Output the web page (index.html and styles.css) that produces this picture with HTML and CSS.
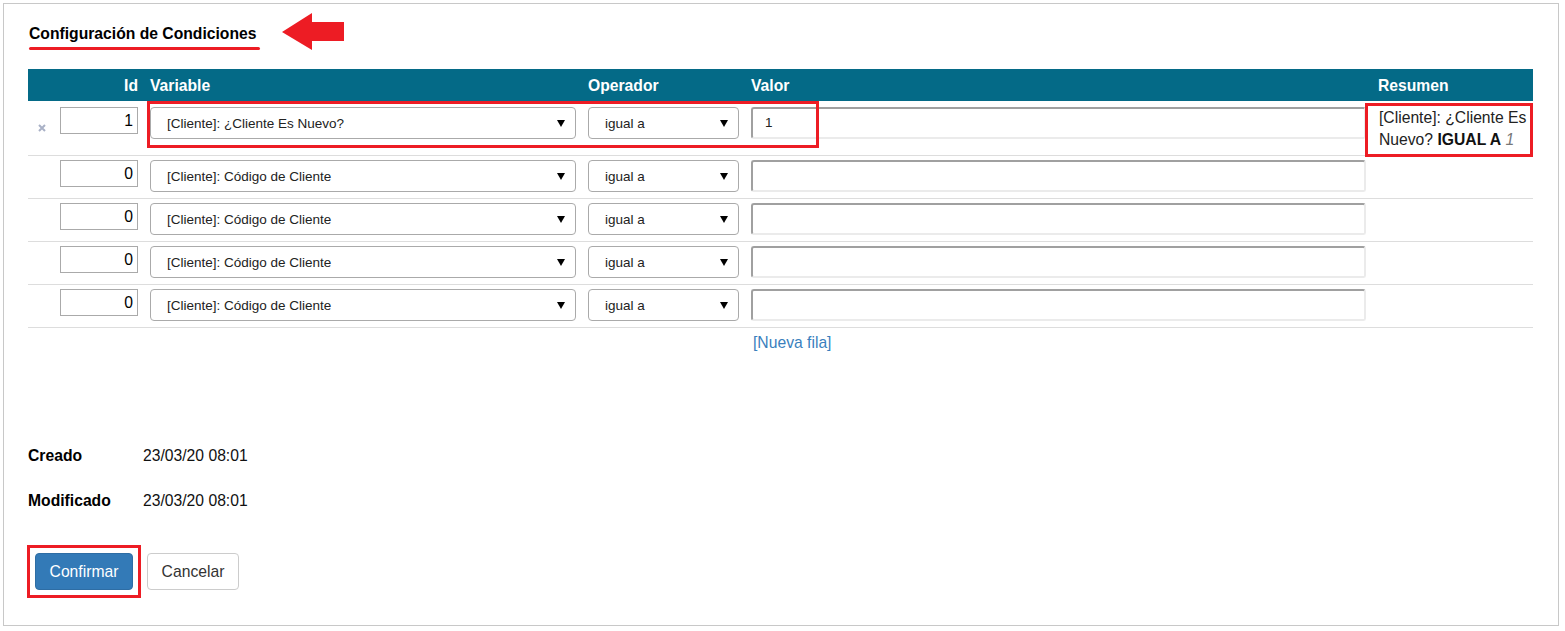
FILE: index.html
```html
<!DOCTYPE html>
<html lang="es">
<head>
    <meta charset="UTF-8">
    <meta name="viewport" content="width=device-width, initial-scale=1.0">
    <title>Configuración de Condiciones</title>
    <link rel="stylesheet" href="styles.css">
</head>
<body>
    <div class="panel">
        <!-- Title -->
        <div class="title-row">
            <h3 class="title">Configuración de Condiciones</h3>
            <svg class="arrow" width="62" height="37" viewBox="0 0 62 37">
                <polygon points="0,19 30,0 30,9 62,9 62,28 30,28 30,37" fill="#ed1c24"/>
            </svg>
        </div>

        <!-- Conditions grid -->
        <div class="grid">
            <div class="row head">
                <span></span>
                <span class="right">Id</span>
                <span>Variable</span>
                <span>Operador</span>
                <span>Valor</span>
                <span>Resumen</span>
            </div>

            <div class="row first">
                <span class="del">
                    <svg width="8" height="8" viewBox="0 0 8 8"><path d="M1 1L7 7M7 1L1 7" stroke="#a9b1c6" stroke-width="2"/></svg>
                </span>
                <div class="id-input">1</div>
                <div class="select"><span>[Cliente]: ¿Cliente Es Nuevo?</span><i class="caret"></i></div>
                <div class="select"><span>igual a</span><i class="caret"></i></div>
                <div class="value-input">1</div>
                <div class="summary">[Cliente]: ¿Cliente Es Nuevo? <b>IGUAL A</b> <em>1</em></div>
            </div>

            <div class="row">
                <span></span>
                <div class="id-input">0</div>
                <div class="select"><span>[Cliente]: Código de Cliente</span><i class="caret"></i></div>
                <div class="select"><span>igual a</span><i class="caret"></i></div>
                <div class="value-input"></div>
                <div class="summary"></div>
            </div>

            <div class="row">
                <span></span>
                <div class="id-input">0</div>
                <div class="select"><span>[Cliente]: Código de Cliente</span><i class="caret"></i></div>
                <div class="select"><span>igual a</span><i class="caret"></i></div>
                <div class="value-input"></div>
                <div class="summary"></div>
            </div>

            <div class="row">
                <span></span>
                <div class="id-input">0</div>
                <div class="select"><span>[Cliente]: Código de Cliente</span><i class="caret"></i></div>
                <div class="select"><span>igual a</span><i class="caret"></i></div>
                <div class="value-input"></div>
                <div class="summary"></div>
            </div>

            <div class="row">
                <span></span>
                <div class="id-input">0</div>
                <div class="select"><span>[Cliente]: Código de Cliente</span><i class="caret"></i></div>
                <div class="select"><span>igual a</span><i class="caret"></i></div>
                <div class="value-input"></div>
                <div class="summary"></div>
            </div>

            <div class="add-row"><a href="#">[Nueva fila]</a></div>

            <!-- highlight marks -->
            <span class="mark mark-cond"></span>
            <span class="mark mark-sum"></span>
        </div>

        <!-- Meta -->
        <div class="meta">
            <div class="meta-row"><span class="label">Creado</span><span>23/03/20 08:01</span></div>
            <div class="meta-row"><span class="label">Modificado</span><span>23/03/20 08:01</span></div>
        </div>

        <!-- Actions -->
        <div class="actions">
            <span class="btn-mark"><button class="btn btn-primary">Confirmar</button></span>
            <button class="btn btn-default">Cancelar</button>
        </div>
    </div>
</body>
</html>
```

FILE: styles.css
```css
body {
    font-family: "Liberation Sans", Arial, sans-serif;
    font-size: 15.7px;
    color: #333;
    margin: 0;
    background: #fff;
}

.panel {
    box-sizing: border-box;
    width: 1556px;
    height: 623px;
    margin: 3px 0 0 3px;
    padding: 21px 24px 0 24px;
    border: 1px solid #c8c8c8;
}

/* Title */
.title-row {
    display: flex;
    align-items: flex-start;
}

.title {
    margin: 0 0 0 1px;
    font-size: 15.7px;
    line-height: 18px;
    font-weight: bold;
    color: #000;
}

.title::after {
    content: "";
    display: block;
    width: calc(100% + 4px);
    height: 3px;
    margin-top: 4px;
    border-radius: 2px;
    background: #ed1c24;
}

.arrow {
    margin: -12px 0 0 26px;
}

/* Grid */
.grid {
    position: relative;
    margin-top: 19px;
    width: 1505px;
}

.row {
    display: grid;
    grid-template-columns: 20px 78px 426px 151px 615px 155px;
    column-gap: 12px;
    align-items: start;
    padding: 4px 0 6px;
    border-bottom: 1px solid #ddd;
}

.row.head {
    height: 32px;
    box-sizing: border-box;
    padding: 2px 0 0;
    align-items: center;
    border: none;
    background: #046a87;
    color: #fff;
    font-weight: bold;
}

.row.first {
    padding: 6px 0 6px;
}

.right { text-align: right; }

.del {
    padding: 17px 0 0 10px;
    line-height: 0;
}

.id-input {
    box-sizing: border-box;
    height: 27px;
    line-height: 25px;
    padding-right: 4px;
    text-align: right;
    border: 1px solid #aaa;
    color: #000;
}

.select {
    box-sizing: border-box;
    height: 32px;
    display: flex;
    align-items: center;
    justify-content: space-between;
    padding: 0 10px 0 16px;
    border: 1px solid #aaa;
    border-radius: 4px;
    font-size: 13.5px;
    color: #222;
}

.caret {
    width: 0;
    height: 0;
    border-left: 4.5px solid transparent;
    border-right: 4.5px solid transparent;
    border-top: 7px solid #000;
}

.value-input {
    box-sizing: border-box;
    height: 32px;
    line-height: 28px;
    padding-left: 12px;
    border-top: 2px solid #a0a0a0;
    border-left: 2px solid #a0a0a0;
    border-right: 2px solid #ebebeb;
    border-bottom: 2px solid #ebebeb;
    border-radius: 3px;
    font-size: 13.5px;
    color: #222;
}

.summary {
    margin: 0 0 -1px 1px;
    line-height: 21.5px;
    color: #222;
}

.summary b { color: #111; }

.summary em { color: #777; }

.add-row {
    padding: 5px 0 0 725px;
    line-height: 20px;
}

.add-row a {
    color: #3a7fbd;
    text-decoration: none;
}

.mark {
    position: absolute;
    box-sizing: border-box;
    border: 3px solid #ed1c24;
}

.mark-cond {
    left: 119px;
    top: 32px;
    width: 672px;
    height: 47px;
}

.mark-sum {
    left: 1337px;
    top: 34px;
    width: 168px;
    height: 54px;
}

/* Meta */
.meta {
    margin-top: 93px;
}

.meta-row {
    display: flex;
    line-height: 20px;
    margin-bottom: 25px;
    color: #111;
}

.label {
    width: 115px;
    font-weight: bold;
    color: #000;
}

/* Actions */
.actions {
    display: flex;
    align-items: center;
    gap: 6px;
    margin: 34px 0 0 -1px;
}

.btn-mark {
    display: inline-block;
    padding: 5px;
    border: 3px solid #ed1c24;
    line-height: 0;
}

.btn {
    height: 37px;
    padding: 0;
    font-family: inherit;
    font-size: 15.7px;
    border-radius: 4px;
    border: 1px solid #ccc;
    cursor: pointer;
}

.btn-primary {
    width: 98px;
    background: #337ab7;
    border-color: #2e6da4;
    color: #fff;
}

.btn-default {
    width: 92px;
    background: #fff;
    color: #333;
}
```
